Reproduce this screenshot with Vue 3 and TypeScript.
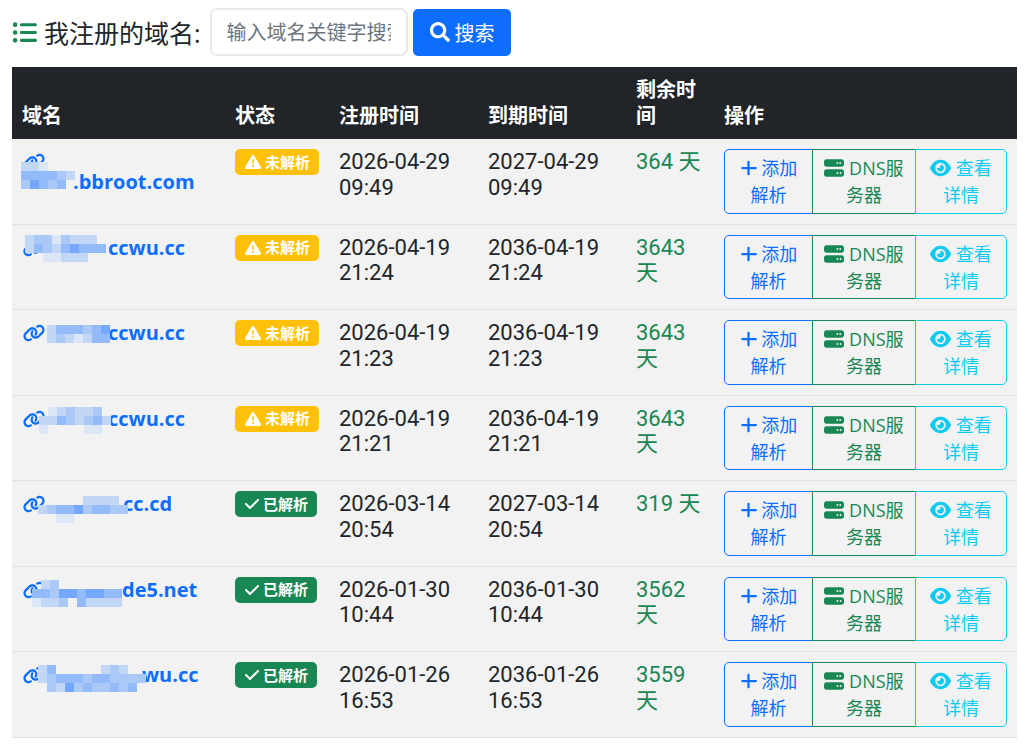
<template>
  <div class="page">
    <div class="toolbar">
      <svg class="list-icon" viewBox="0 0 512 512"><path :d="icons.list" /></svg>
      <h5 class="title">我注册的域名:</h5>
      <input class="search-input" type="text" placeholder="输入域名关键字搜索" />
      <button class="search-btn">
        <svg class="ic" viewBox="0 0 512 512"><path :d="icons.search" /></svg>
        搜索
      </button>
    </div>

    <table class="domain-table">
      <colgroup>
        <col class="c-domain" />
        <col class="c-status" />
        <col class="c-reg" />
        <col class="c-exp" />
        <col class="c-left" />
        <col />
      </colgroup>
      <thead>
        <tr>
          <th>域名</th>
          <th>状态</th>
          <th>注册时间</th>
          <th>到期时间</th>
          <th>剩余时间</th>
          <th>操作</th>
        </tr>
      </thead>
      <tbody>
        <tr v-for="row in rows" :key="row.suffix + row.reg">
          <td>
            <a class="domain" href="#">
              <svg class="link-icon" viewBox="0 0 640 512"><path :d="icons.link" /></svg>
              <span class="name"><span class="blur" :style="{ width: row.blurWidth + 'px' }"></span>{{ row.suffix }}</span>
              <svg class="mosaic" :style="{ left: row.mx + 'px', top: row.my + 'px' }" :width="row.cells[0].length * 9" :height="row.cells.length * 9">
                <template v-for="(line, y) in row.cells" :key="y">
                  <template v-for="(c, x) in line" :key="x">
                    <rect v-if="c !== '.'" :x="x * 9" :y="y * 9" width="9" height="9" :fill="shades[c]" />
                  </template>
                </template>
              </svg>
            </a>
          </td>
          <td>
            <span v-if="row.ok" class="badge ok">
              <svg class="badge-ic check" viewBox="0 0 448 512"><path :d="icons.check" /></svg>已解析
            </span>
            <span v-else class="badge warn">
              <svg class="badge-ic" viewBox="0 0 512 512"><path :d="icons.warn" /></svg>未解析
            </span>
          </td>
          <td class="time">{{ row.reg }}<br />{{ row.regTime }}</td>
          <td class="time">{{ row.exp }}<br />{{ row.expTime }}</td>
          <td class="time left">{{ row.left }} 天</td>
          <td>
            <div class="btn-group">
              <a class="btn blue">
                <svg class="ic" viewBox="0 0 448 512"><path :d="icons.plus" /></svg> 添加解析
              </a>
              <a class="btn green">
                <svg class="ic server" viewBox="0 0 512 512"><path :d="icons.server" /></svg> DNS服务器
              </a>
              <a class="btn cyan">
                <svg class="ic eye" viewBox="0 0 576 512"><path :d="icons.eye" /></svg> 查看详情
              </a>
            </div>
          </td>
        </tr>
      </tbody>
    </table>
  </div>
</template>

<script setup lang="ts">
const icons = {
  list: 'M64 144a48 48 0 1 0 0-96 48 48 0 1 0 0 96zM192 64c-17.7 0-32 14.3-32 32s14.3 32 32 32H480c17.7 0 32-14.3 32-32s-14.3-32-32-32H192zm0 160c-17.7 0-32 14.3-32 32s14.3 32 32 32H480c17.7 0 32-14.3 32-32s-14.3-32-32-32H192zm0 160c-17.7 0-32 14.3-32 32s14.3 32 32 32H480c17.7 0 32-14.3 32-32s-14.3-32-32-32H192zM64 464a48 48 0 1 0 0-96 48 48 0 1 0 0 96zm48-208a48 48 0 1 0 -96 0 48 48 0 1 0 96 0z',
  search: 'M505 442.7L405.3 343c-4.5-4.5-10.6-7-17-7H372c27.6-35.3 44-79.7 44-128C416 93.1 322.9 0 208 0S0 93.1 0 208s93.1 208 208 208c48.3 0 92.7-16.4 128-44v16.3c0 6.4 2.5 12.5 7 17l99.7 99.7c9.4 9.4 24.6 9.4 33.9 0l28.3-28.3c9.4-9.4 9.4-24.6.1-34zM208 336c-70.7 0-128-57.2-128-128 0-70.7 57.2-128 128-128 70.7 0 128 57.2 128 128 0 70.7-57.2 128-128 128z',
  link: 'M579.8 267.7c56.5-56.5 56.5-148 0-204.5c-50-50-128.8-56.5-186.3-15.4l-1.6 1.1c-14.4 10.3-17.7 30.3-7.4 44.6s30.3 17.7 44.6 7.4l1.6-1.1c32.1-22.9 76-19.3 103.8 8.6c31.5 31.5 31.5 82.5 0 114L422.3 334.8c-31.5 31.5-82.5 31.5-114 0c-27.9-27.9-31.5-71.8-8.6-103.8l1.1-1.6c10.3-14.4 6.9-34.4-7.4-44.6s-34.4-6.9-44.6 7.4l-1.1 1.6C206.5 251.2 213 330 263 380c56.5 56.5 148 56.5 204.5 0L579.8 267.7zM60.2 244.3c-56.5 56.5-56.5 148 0 204.5c50 50 128.8 56.5 186.3 15.4l1.6-1.1c14.4-10.3 17.7-30.3 7.4-44.6s-30.3-17.7-44.6-7.4l-1.6 1.1c-32.1 22.9-76 19.3-103.8-8.6C74 372 74 321 105.5 289.5L217.7 177.2c31.5-31.5 82.5-31.5 114 0c27.9 27.9 31.5 71.8 8.6 103.9l-1.1 1.6c-10.3 14.4-6.9 34.4 7.4 44.6s34.4 6.9 44.6-7.4l1.1-1.6C433.5 260.8 427 182 377 132c-56.5-56.5-148-56.5-204.5 0L60.2 244.3z',
  check: 'M438.6 105.4c12.5 12.5 12.5 32.8 0 45.3l-256 256c-12.5 12.5-32.8 12.5-45.3 0l-128-128c-12.5-12.5-12.5-32.8 0-45.3s32.8-12.5 45.3 0L160 338.7 393.4 105.4c12.5-12.5 32.8-12.5 45.3 0z',
  warn: 'M256 32c14.2 0 27.3 7.5 34.5 19.8l216 368c7.3 12.4 7.3 27.7 .2 40.1S486.3 480 472 480H40c-14.3 0-27.6-7.7-34.7-20.1s-7-27.8 .2-40.1l216-368C228.7 39.5 241.8 32 256 32zm0 128c-13.3 0-24 10.7-24 24V296c0 13.3 10.7 24 24 24s24-10.7 24-24V184c0-13.3-10.7-24-24-24zm32 224a32 32 0 1 0 -64 0 32 32 0 1 0 64 0z',
  plus: 'M256 80c0-17.7-14.3-32-32-32s-32 14.3-32 32V224H48c-17.7 0-32 14.3-32 32s14.3 32 32 32H192V432c0 17.7 14.3 32 32 32s32-14.3 32-32V288H432c17.7 0 32-14.3 32-32s-14.3-32-32-32H256V80z',
  server: 'M64 32C28.7 32 0 60.7 0 96v64c0 35.3 28.7 64 64 64H448c35.3 0 64-28.7 64-64V96c0-35.3-28.7-64-64-64H64zm280 72a24 24 0 1 1 0 48 24 24 0 1 1 0-48zm48 24a24 24 0 1 1 48 0 24 24 0 1 1 -48 0zM64 288c-35.3 0-64 28.7-64 64v64c0 35.3 28.7 64 64 64H448c35.3 0 64-28.7 64-64V352c0-35.3-28.7-64-64-64H64zm280 72a24 24 0 1 1 0 48 24 24 0 1 1 0-48zm56 24a24 24 0 1 1 48 0 24 24 0 1 1 -48 0z',
  eye: 'M288 32c-80.8 0-145.5 36.8-192.6 80.6C48.6 156 17.3 208 2.5 243.7c-3.3 7.9-3.3 16.7 0 24.6C17.3 304 48.6 356 95.4 399.4C142.5 443.2 207.2 480 288 480s145.5-36.8 192.6-80.6c46.8-43.5 78.1-95.4 93-131.1c3.3-7.9 3.3-16.7 0-24.6c-14.9-35.7-46.2-87.7-93-131.1C433.5 68.8 368.8 32 288 32zM144 256a144 144 0 1 1 288 0 144 144 0 1 1 -288 0zm144-64c0 35.3-28.7 64-64 64c-7.1 0-13.9-1.2-20.3-3.3c-5.5-1.8-11.9 1.6-11.7 7.4c.3 6.9 1.3 13.8 3.2 20.7c13.7 51.2 66.4 81.6 117.6 67.9s81.6-66.4 67.9-117.6c-11.1-41.5-47.8-69.4-88.6-71.1c-5.8-.2-9.2 6.1-7.4 11.7c2.1 6.4 3.3 13.2 3.3 20.3z',
}

// blurred parts of the domain names, one letter per 9px cell
const shades: Record<string, string> = {
  a: '#dbe6f6',
  b: '#c2d7f6',
  c: '#abc9f7',
  d: '#93bbf9',
  e: '#74a8fc',
}

interface Row {
  suffix: string
  blurWidth: number
  mx: number
  my: number
  cells: string[]
  ok: boolean
  reg: string
  regTime: string
  exp: string
  expTime: string
  left: number
}

const rows: Row[] = [
  { suffix: '.bbroot.com', blurWidth: 51, mx: -1, my: 13, cells: ['bba...', 'ddddcb', 'cedcd.'], ok: false, reg: '2026-04-29', regTime: '09:49', exp: '2027-04-29', expTime: '09:49', left: 364 },
  { suffix: 'ccwu.cc', blurWidth: 62, mx: 3, my: 0, cells: ['bccacbbb.', 'bdcbdeddd', '..aabbb..'], ok: false, reg: '2026-04-19', regTime: '21:24', exp: '2036-04-19', expTime: '21:24', left: 3643 },
  { suffix: 'ccwu.cc', blurWidth: 62, mx: 25, my: 5, cells: ['bdddcde', 'bcbabdd'], ok: false, reg: '2026-04-19', regTime: '21:23', exp: '2036-04-19', expTime: '21:23', left: 3643 },
  { suffix: 'ccwu.cc', blurWidth: 62, mx: 17, my: 1, cells: ['.abcbbc.', 'bbdcbcdb', 'a....aa.'], ok: false, reg: '2026-04-19', regTime: '21:21', exp: '2036-04-19', expTime: '21:21', left: 3643 },
  { suffix: 'cc.cd', blurWidth: 77, mx: 16, my: 5, cells: ['.....bbbb.', 'bcddecddcc', '..aa......'], ok: true, reg: '2026-03-14', regTime: '20:54', exp: '2027-03-14', expTime: '20:54', left: 319 },
  { suffix: 'de5.net', blurWidth: 76, mx: 10, my: 3, cells: ['.bc.......', 'ddceedeedd', 'abbc.dbbbb'], ok: true, reg: '2026-01-30', regTime: '10:44', exp: '2036-01-30', expTime: '10:44', left: 3562 },
  { suffix: 'wu.cc', blurWidth: 96, mx: 16, my: 3, cells: ['bd.....bcb..', 'bcdddcddcccc', '.cbecdccdcd.'], ok: true, reg: '2026-01-26', regTime: '16:53', exp: '2036-01-26', expTime: '16:53', left: 3559 },
]
</script>

<style scoped>
.page {
  padding: 8px 18px 0 12px;
  font-family: "Open Sans", "Noto Sans CJK SC", sans-serif;
  color: #212529;
  width: 1005px;
  box-sizing: content-box;
}

.toolbar {
  display: flex;
  align-items: center;
  height: 48px;
  margin-bottom: 11px;
}

.list-icon {
  width: 25px;
  height: 25px;
  fill: #198754;
  flex-shrink: 0;
  margin-right: 7px;
}

.title {
  margin: 0;
  font-size: 25px;
  font-weight: 400;
  margin-right: 9px;
}

.search-input {
  width: 198px;
  height: 48px;
  box-sizing: border-box;
  padding: 0 15px;
  border: 2px solid #e6eaee;
  border-radius: 7px;
  font-family: inherit;
  font-size: 20px;
  background: #fff;
  outline: none;
  margin-right: 5px;
}

.search-input::placeholder {
  color: #6c757d;
}

.search-btn {
  display: flex;
  align-items: center;
  gap: 5px;
  height: 47px;
  padding: 0 15px 0 17px;
  width: 98px;
  border: none;
  border-radius: 5px;
  background: #0d6efd;
  color: #fff;
  font-family: inherit;
  font-size: 20px;
}

.search-btn .ic {
  width: 20px;
  height: 20px;
  fill: #fff;
}

.domain-table {
  width: 1005px;
  border-collapse: collapse;
  table-layout: fixed;
  font-size: 20px;
  line-height: 25px;
}

.c-domain { width: 213px; }
.c-status { width: 104px; }
.c-reg { width: 149px; }
.c-exp { width: 148px; }
.c-left { width: 88px; }

th {
  background: #212529;
  color: #fff;
  font-weight: 700;
  text-align: left;
  vertical-align: bottom;
  padding: 10px;
  line-height: 26px;
}

td {
  background: #f2f2f2;
  padding: 10px;
  vertical-align: top;
  border-bottom: 1px solid #dee2e6;
}

.time {
  font-family: Roboto, "Noto Sans CJK SC", sans-serif;
  font-size: 22px;
  line-height: 25.5px;
}

.domain {
  position: relative;
  display: block;
  padding-top: 3px;
  color: #0d6efd;
  font-weight: 700;
  text-decoration: none;
  font-size: 20px;
  line-height: 20px;
}

.link-icon {
  width: 24px;
  height: 18px;
  fill: #0d6efd;
  vertical-align: -2px;
}

.name {
  white-space: nowrap;
}

.blur {
  display: inline-block;
}

.mosaic {
  position: absolute;
}

.badge {
  display: inline-flex;
  align-items: center;
  gap: 4px;
  height: 26px;
  padding: 0 9px 0 10px;
  border-radius: 5px;
  color: #fff;
  font-size: 15px;
  font-weight: 700;
  line-height: 1;
  white-space: nowrap;
  vertical-align: top;
}

.badge.warn { background: #ffc107; }
.badge.ok { background: #198754; }

.badge-ic {
  width: 16px;
  height: 16px;
  fill: #fff;
}

.badge-ic.check {
  width: 14px;
}

.left {
  color: #198754;
}

.btn-group {
  display: flex;
  height: 64.5px;
  font-size: 18px;
  line-height: 27px;
  text-align: center;
}

.btn {
  box-sizing: border-box;
  padding: 5px 8px;
  border: 1px solid;
}

.btn .ic {
  width: 17px;
  height: 18px;
  vertical-align: -2px;
}

.btn.blue {
  flex: 0 0 89px;
  color: #0d6efd;
  border-radius: 5px 0 0 5px;
}
.btn.blue .ic { fill: #0d6efd; }

.btn.green {
  flex: 0 0 104px;
  color: #198754;
  margin-left: -1px;
}
.btn.green .ic { fill: #198754; width: 20px; height: 20px; vertical-align: -3px; }

.btn.cyan {
  flex: 1;
  color: #0dcaf0;
  margin-left: -1px;
  border-radius: 0 5px 5px 0;
}
.btn.cyan .ic { fill: #0dcaf0; width: 21px; height: 20px; vertical-align: -3px; }
</style>
